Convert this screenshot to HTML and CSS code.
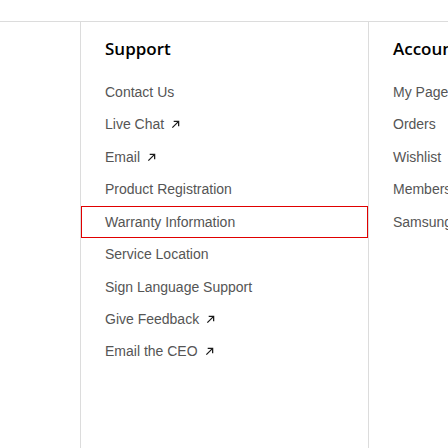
FILE: index.html
```html
<!DOCTYPE html>
<html lang="en">
<head>
<meta charset="utf-8">
<title>Footer</title>
<link rel="stylesheet" href="styles.css">
</head>
<body>
<div class="top-space"></div>
<nav class="footer">
  <section class="col">
    <h2 class="col-title">Support</h2>
    <ul class="links">
      <li><a class="link" href="#">Contact Us</a></li>
      <li><a class="link" href="#">Live Chat<svg class="ext" viewBox="0 0 10 10"><path d="M1.5 8.5L8.5 1.5M3 1.5H8.5V7"/></svg></a></li>
      <li><a class="link" href="#">Email<svg class="ext" viewBox="0 0 10 10"><path d="M1.5 8.5L8.5 1.5M3 1.5H8.5V7"/></svg></a></li>
      <li><a class="link" href="#">Product Registration</a></li>
      <li><a class="link focused" href="#">Warranty Information</a></li>
      <li><a class="link" href="#">Service Location</a></li>
      <li><a class="link" href="#">Sign Language Support</a></li>
      <li><a class="link" href="#">Give Feedback<svg class="ext" viewBox="0 0 10 10"><path d="M1.5 8.5L8.5 1.5M3 1.5H8.5V7"/></svg></a></li>
      <li><a class="link" href="#">Email the CEO<svg class="ext" viewBox="0 0 10 10"><path d="M1.5 8.5L8.5 1.5M3 1.5H8.5V7"/></svg></a></li>
    </ul>
  </section>
  <section class="col">
    <h2 class="col-title">Account</h2>
    <ul class="links">
      <li><a class="link" href="#">My Page</a></li>
      <li><a class="link" href="#">Orders</a></li>
      <li><a class="link" href="#">Wishlist</a></li>
      <li><a class="link" href="#">Membership</a></li>
      <li><a class="link" href="#">Samsung Rewards</a></li>
    </ul>
  </section>
</nav>
</body>
</html>
```
FILE: styles.css
```css
html, body {
  height: 100%;
}
body {
  margin: 0;
  overflow: hidden;
  background: #fff;
  display: flex;
  flex-direction: column;
  font-family: "Liberation Sans", Arial, sans-serif;
}
.top-space {
  height: 21px;
  flex-shrink: 0;
}
.footer {
  flex: 1;
  display: flex;
  min-width: 0;
  overflow: hidden;
  border-top: 1px solid #dcdcdc;
  padding-left: 80px;
}
.col {
  width: 288px;
  flex-shrink: 0;
  border-left: 1px solid #dcdcdc;
  padding-top: 15px;
  box-sizing: border-box;
}
.col-title {
  margin: 0 0 0 24px;
  font-family: "Open Sans", "Liberation Sans", Arial, sans-serif;
  font-weight: 600;
  font-size: 17px;
  line-height: 24px;
  color: #000;
  white-space: nowrap;
}
.links {
  list-style: none;
  margin: 15px 0 0;
  padding: 0;
}
.link {
  display: flex;
  align-items: center;
  gap: 7px;
  padding: 5.6px 0 6.9px 24px;
  font-size: 14px;
  line-height: 20px;
  color: #555;
  text-decoration: none;
  white-space: nowrap;
}
.focused {
  outline: 1px solid #e00000;
  outline-offset: -1px;
}
.ext {
  width: 9px;
  height: 9px;
  fill: none;
  stroke: #1a1a1a;
  stroke-width: 1.4;
  margin-top: 1px;
}
```
